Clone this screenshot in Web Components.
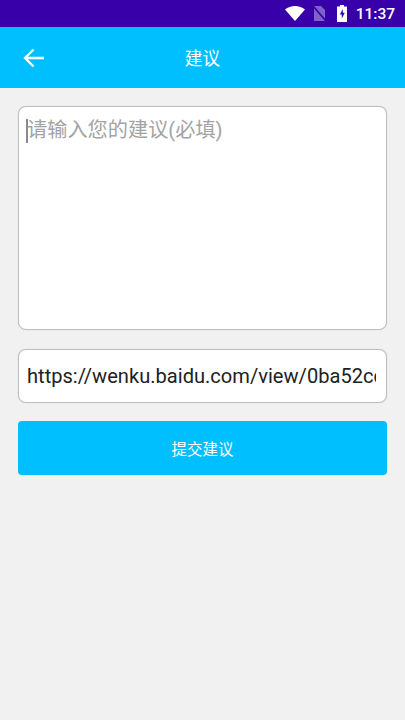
<!DOCTYPE html>
<html lang="zh">
<head>
<meta charset="utf-8">
<style>
html,body{margin:0;padding:0;height:100%;background:#f1f1f1;font-family:Roboto,"Noto Sans CJK SC",sans-serif}
body{width:405px;height:720px;overflow:hidden}
</style>
</head>
<body>
<status-bar></status-bar>
<app-bar title="建议"></app-bar>
<main-form>
  <text-box kind="area" placeholder="请输入您的建议(必填)"></text-box>
  <text-box kind="line" value="https://wenku.baidu.com/view/0ba52cc0"></text-box>
  <submit-button>提交建议</submit-button>
</main-form>
<script>
function def(name, html){
  customElements.define(name, class extends HTMLElement{
    connectedCallback(){
      if(this.shadowRoot) return;
      const r=this.attachShadow({mode:'open'});
      r.innerHTML=typeof html==='function'?html(this):html;
    }
  });
}
def('status-bar',`<style>
:host{display:flex;height:27px;background:#3700a8;color:#fff;align-items:center;justify-content:flex-end;padding-right:10px;box-sizing:border-box;font:500 15.500px Roboto,sans-serif}
svg{display:block}
.w{margin-right:8px}.s{margin-right:11px}.b{margin-right:9px}
</style>
<svg class="w" width="20" height="15" viewBox="0 0 20 15"><path d="M0 3.600C2.800 1.300 6.200 0 10 0s7.200 1.300 10 3.600L10 15z" fill="#fff"/></svg>
<svg class="s" width="13" height="15" viewBox="0 0 13 15"><path d="M1 0h7l4 4v11H1z" fill="#7e62c8"/><path d="M0 0l13 15" stroke="#3700a8" stroke-width="1.600"/></svg>
<svg class="b" width="10" height="17" viewBox="0 0 10 17"><path fill-rule="evenodd" d="M3 0h4v1.500h3V17H0V1.500h3zM5.800 4L2.800 9.500h2v4l3-5.700h-2z" fill="#fff"/></svg>
<span>11:37</span>`);
def('app-bar',h=>`<style>
:host{display:grid;grid-template-columns:68px 1fr 68px;height:61px;background:#00bfff;color:#fff;align-items:center}
svg{display:block;margin-left:23px}
span{text-align:center;font:17.700px "Noto Sans CJK SC",sans-serif;line-height:1}
</style>
<svg width="22" height="20" viewBox="0 0 22 20"><path d="M21 10H2M10.500 1.500L2 10l8.500 8.500" fill="none" stroke="#fff" stroke-width="2.300"/></svg>
<span>${h.getAttribute('title')}</span><i></i>`);
def('main-form',`<style>
:host{display:flex;flex-direction:column;padding:18px 18px 0;box-sizing:border-box}
::slotted(text-box[kind=line]){margin-top:19px}
::slotted(submit-button){margin-top:18px}
</style><slot></slot>`);
def('text-box',h=>{
  const area=h.getAttribute('kind')==='area';
  return `<style>
:host{display:block;box-sizing:border-box;background:#fff;border:1px solid #bfbfbf;box-shadow:0 0 1px #c4c4c4;border-radius:8px;overflow:hidden;height:${area?224:54}px;position:relative}
.t{font:20.200px Roboto,"Noto Sans CJK SC",sans-serif;white-space:nowrap;overflow:hidden}
.p{color:#a3a3a3;padding:8.500px 0 0 8px;line-height:28px}
.v{font-size:20.100px;color:#212121;margin:0 10px 0 8px;line-height:52px}
.c{position:absolute;left:7px;top:12px;width:1.500px;height:24px;background:#8a8a8a}
</style>${area?`<div class="c"></div><div class="t p">${h.getAttribute('placeholder')}</div>`:`<div class="t v">${h.getAttribute('value')}</div>`}`;
});
def('submit-button',`<style>
:host{display:flex;height:54px;background:#00bfff;border-radius:4px;color:#fff;align-items:center;justify-content:center;font:15.500px "Noto Sans CJK SC",sans-serif;padding-bottom:1px;box-sizing:border-box}
</style><slot></slot>`);
</script>
</body>
</html>
